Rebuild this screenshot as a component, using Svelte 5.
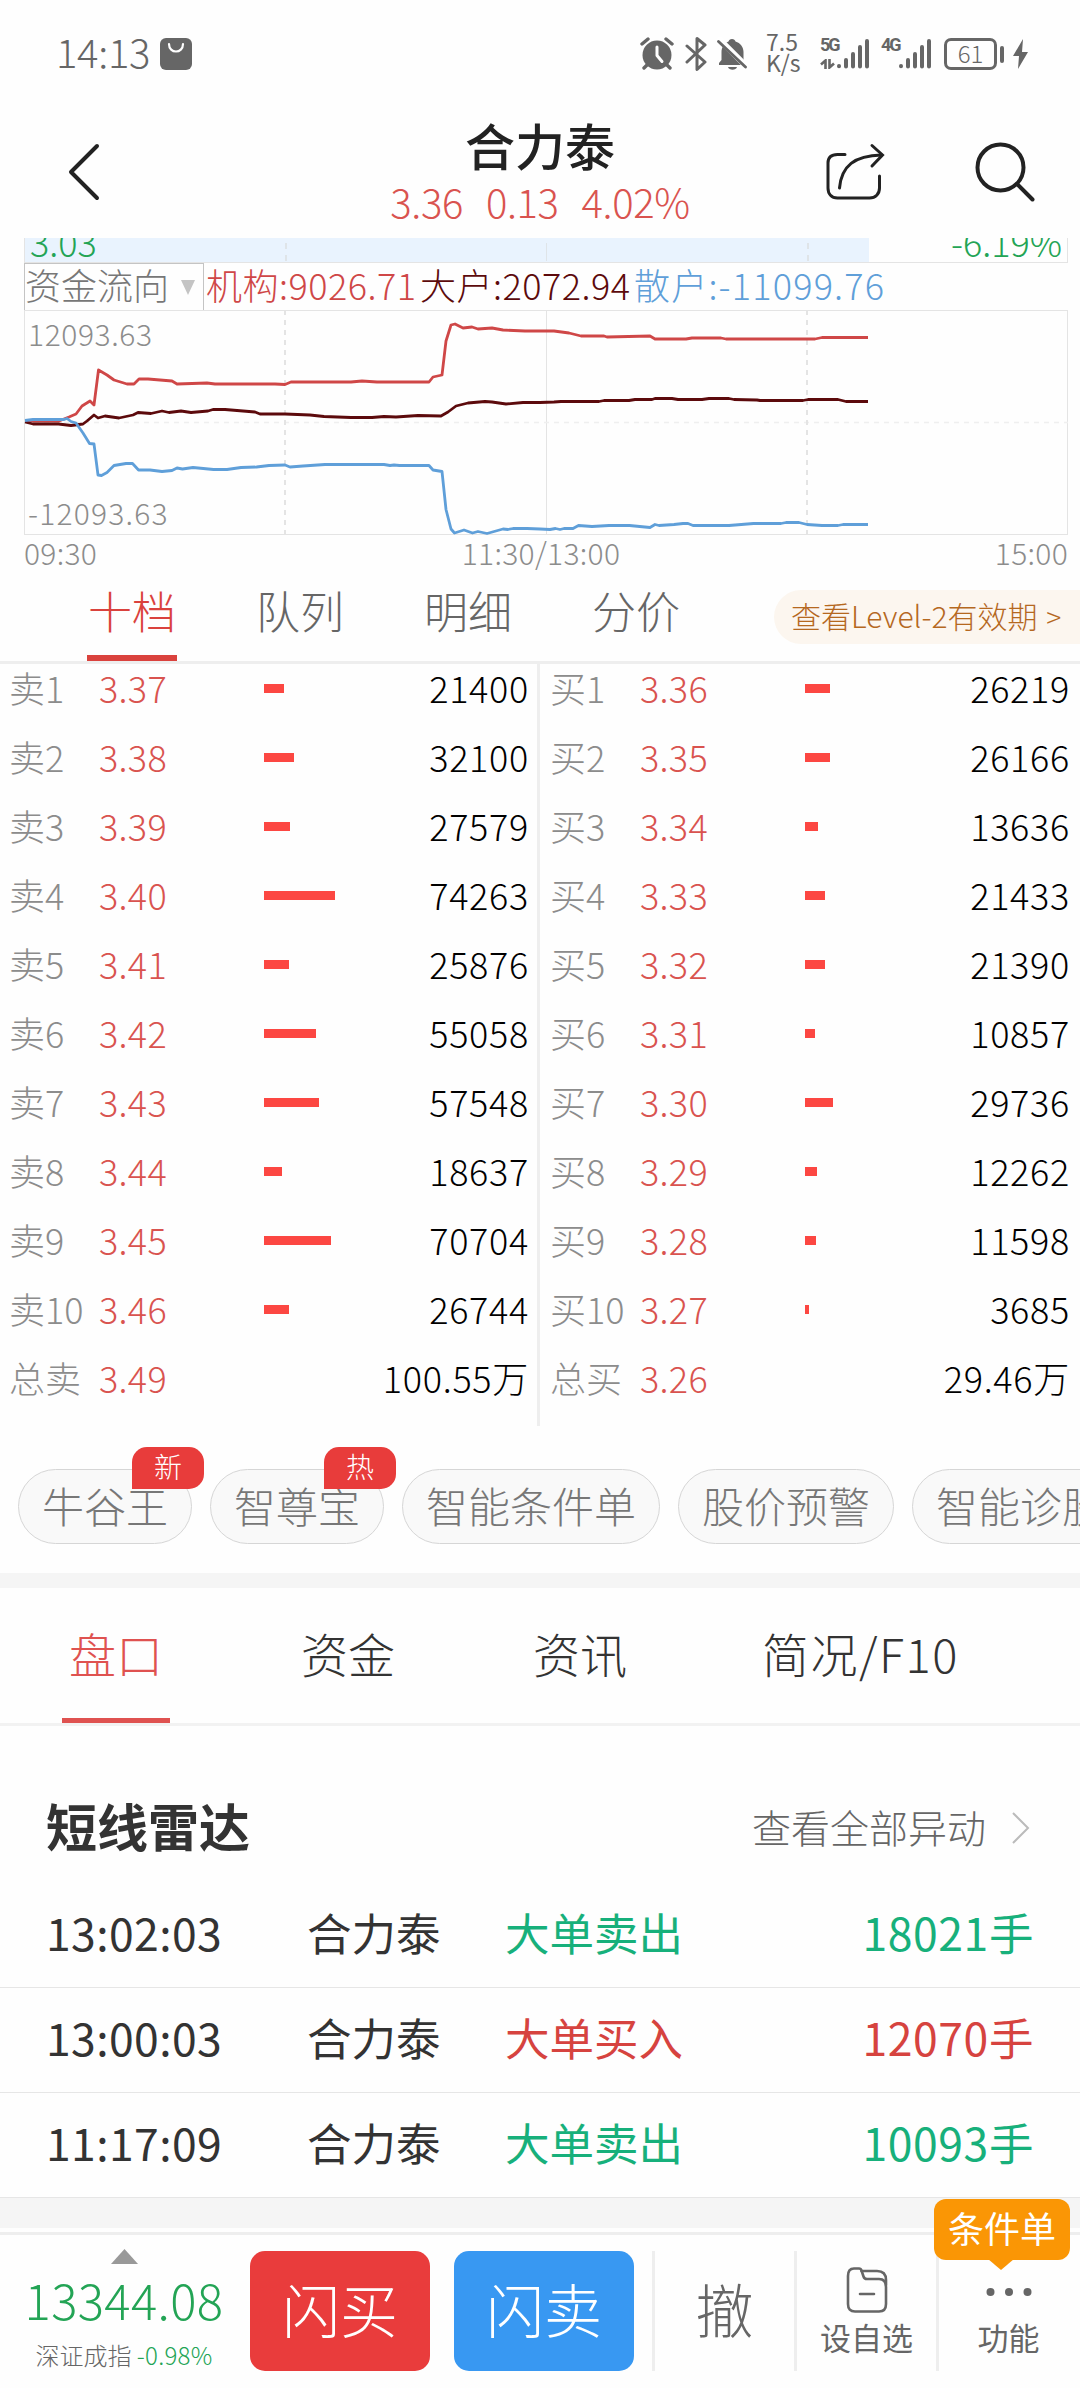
<script lang="ts">
  type Order = { label: string; price: string; amount: number | string };

  const sells: Order[] = [
    { label: '卖1', price: '3.37', amount: 21400 },
    { label: '卖2', price: '3.38', amount: 32100 },
    { label: '卖3', price: '3.39', amount: 27579 },
    { label: '卖4', price: '3.40', amount: 74263 },
    { label: '卖5', price: '3.41', amount: 25876 },
    { label: '卖6', price: '3.42', amount: 55058 },
    { label: '卖7', price: '3.43', amount: 57548 },
    { label: '卖8', price: '3.44', amount: 18637 },
    { label: '卖9', price: '3.45', amount: 70704 },
    { label: '卖10', price: '3.46', amount: 26744 },
    { label: '总卖', price: '3.49', amount: '100.55万' }
  ];

  const buys: Order[] = [
    { label: '买1', price: '3.36', amount: 26219 },
    { label: '买2', price: '3.35', amount: 26166 },
    { label: '买3', price: '3.34', amount: 13636 },
    { label: '买4', price: '3.33', amount: 21433 },
    { label: '买5', price: '3.32', amount: 21390 },
    { label: '买6', price: '3.31', amount: 10857 },
    { label: '买7', price: '3.30', amount: 29736 },
    { label: '买8', price: '3.29', amount: 12262 },
    { label: '买9', price: '3.28', amount: 11598 },
    { label: '买10', price: '3.27', amount: 3685 },
    { label: '总买', price: '3.26', amount: '29.46万' }
  ];

  const depthTabs = ['十档', '队列', '明细', '分价'];
  const infoTabs = ['盘口', '资金', '资讯', '简况/F10'];

  const tools = [
    { name: '牛谷王', badge: '新' },
    { name: '智尊宝', badge: '热' },
    { name: '智能条件单' },
    { name: '股价预警' },
    { name: '智能诊股' }
  ];

  const radar = [
    { time: '13:02:03', type: '大单卖出', amount: '18021手', side: 'sell' },
    { time: '13:00:03', type: '大单买入', amount: '12070手', side: 'buy' },
    { time: '11:17:09', type: '大单卖出', amount: '10093手', side: 'sell' }
  ];

  // capital flow lines, one per investor group
  const orgLine = '1,111 35,111 45,107 52,104 58,96 66,91 70,95 74.5,60 83,65 90,70 103,74 110,74 115,69 124,69 148,71 153,74 183,73 191,74 251,74 261,74.5 267,72 327,72 338,71 353,72 405,72 409,67 418,65 422,31 427,15 431,14 439,18 448,17 454,19 468,18 479,20 501,21 516,21 530,21 545,23 557,26 580,26 583,27 626,26 631,29 662,29 668,28 697,28 702,29 791,29 798,27.5 844,27.5';
  const bigLine = '1,112 9,114 34.5,114 47,115.5 59,114 63,111 70,105 74,108 81,106 95,108 109,105 114,102.5 127,103.5 138,101 145,102.5 157,101 167,102.5 184,101 189,99.5 201,99.5 231,102 236,104 251,104 261,104 286,105 300,106.5 327,107.5 348,107.5 360,106.5 372,107 394,105.5 417,106 424,102 432,96 444,93 461,91.5 468,92 482,94 499,92.5 516,92.5 530,92 537,91.5 575,91.5 580,90.5 605,90.5 611,89.5 628,89.5 631,88.5 648,88.5 654,89.5 678,89.5 685,88.5 705,88.5 710,89.5 733,90 736,90.5 779,90.5 784,89.5 814,89.5 822,91.5 844,91.5';
  const retailLine = '1,110.5 9,109.5 40,109.5 43,108.5 47,111.5 52,113 59,123 65.5,133.5 70,134 74,165 77.5,165.5 83,162.5 90,155.5 102,153.5 108.5,153.5 114.5,160 126,160 138,161.5 148,160.5 153,158 158.5,159 169,157.5 189.5,159.5 203,159.5 217,157.5 232.5,157 245,155.5 261,155 266,157 279,156 301,154.5 360,154.5 366,155.5 370,155 375.5,155.5 405,155.5 409,160 418,161.5 422,199.5 427,219 430.5,223 440,220 448.5,223 454,221.5 463,223.5 479,219 484,219.5 489,218.5 503,218.5 516,219 526,219.5 531.5,218.5 536,219.5 540,218.5 549,218.5 554.5,215.5 568,216.5 585,215.5 605.5,215.5 626,217.5 631,214.5 635,215.5 650,214.5 659,213.5 664,213.5 669,215.5 705,215.5 729.5,213.5 757,213.5 762,212.5 775,212.5 783,214.5 798,215.5 814,215.5 819,214.5 844,214.5';

  const barWidth = (amount: number) => Math.round(amount * 0.00095);
</script>

{#snippet orders(list: Order[])}
  <div class="orders">
    {#each list as row}
      <div class="order">
        <span class="order-label">{row.label}</span>
        <span class="order-price">{row.price}</span>
        <span class="order-track">
          {#if typeof row.amount === 'number'}
            <i class="order-bar" style="width: {barWidth(row.amount)}px"></i>
          {/if}
        </span>
        <span class="order-amount">{row.amount}</span>
      </div>
    {/each}
  </div>
{/snippet}

{#snippet signal()}
  <svg class="signal" width="34" height="32" viewBox="0 0 34 32">
    <g stroke="#666" stroke-width="4" stroke-linecap="round">
      <path d="M3 28v.2M10 22v6.5M17 16v12.5M24 9v19.5M31 3v25.5" />
    </g>
  </svg>
{/snippet}

<div class="app">
  <div class="status">
    <span class="clock">14:13</span>
    <svg class="bag" width="32" height="32" viewBox="0 0 32 32">
      <rect width="32" height="32" rx="6" fill="#666" />
      <path d="M9 6c0 10 14 10 14 0" fill="none" stroke="#fff" stroke-width="2.2" stroke-linecap="round" />
    </svg>
    <svg class="alarm" width="34" height="34" viewBox="0 0 34 34">
      <circle cx="17" cy="18" r="14.5" fill="#666" />
      <path d="M2 7l6-5M32 7l-6-5M7 28l-3 3M27 28l3 3" stroke="#666" stroke-width="3.4" stroke-linecap="round" />
      <path d="M17 10v8.500l5 6" fill="none" stroke="#fff" stroke-width="3" stroke-linecap="round" stroke-linejoin="round" />
    </svg>
    <svg class="bluetooth" width="22" height="36" viewBox="0 0 22 36">
      <path d="M2 10l18 16-8 7.500V2.500L20 9 2 26" fill="none" stroke="#666" stroke-width="3" stroke-linecap="round" stroke-linejoin="round" />
    </svg>
    <svg class="bell" width="31" height="34" viewBox="0 0 31 34">
      <path d="M15 2c2 0 3 1 3.500 2.500 5 1.500 8 5.500 8 10.500v8l3 5H2v-2l2.500-3v-8c0-5 3-9 7-10.500C12 3 13 2 15 2z" fill="#666" />
      <path d="M11 30h9c-1 3.500-8 3.500-9 0z" fill="#666" />
      <path d="M1 1l29 29" stroke="#fff" stroke-width="6" />
      <path d="M1.500 4.500l27 25.500" stroke="#666" stroke-width="2.800" stroke-linecap="round" />
    </svg>
    <span class="speed"><b>7.5</b><b>K/s</b></span>
    <span class="net">
      <b>5G</b>
      <svg width="15" height="10" viewBox="0 0 15 10">
        <path d="M5.500 10V1.500L1 5.500M9.500 0v8.500l4.500-4" fill="none" stroke="#666" stroke-width="2.600" />
      </svg>
    </span>
    {@render signal()}
    <span class="net net-4g"><b>4G</b></span>
    {@render signal()}
    <span class="battery">61</span>
    <i class="battery-cap"></i>
    <svg class="bolt" width="15" height="30" viewBox="0 0 15 30">
      <path d="M10 0L0 17h6L5 30l10-17H9z" fill="#666" />
    </svg>
  </div>

  <header>
    <svg class="back" width="34" height="60" viewBox="0 0 34 60">
      <path d="M30 4L4 30l26 26" fill="none" stroke="#222" stroke-width="4" stroke-linecap="round" stroke-linejoin="round" />
    </svg>
    <div class="stock">
      <h1>合力泰</h1>
      <p><span>3.36</span><span>0.13</span><span>4.02%</span></p>
    </div>
    <svg class="share" width="60" height="60" viewBox="0 0 60 60">
      <g fill="none" stroke="#222" stroke-width="3" stroke-linecap="round">
        <path d="M20 12.500h-7.500C6 12.500 3 16 3 21v25c0 6 3.500 10 9.500 10h32c6 0 10-4 10-10V34" />
        <path d="M14.500 46c2-22 15-32.500 42-33" />
        <path d="M47 3.500l10.500 9.500L47 24" />
      </g>
    </svg>
    <svg class="search" width="60" height="60" viewBox="0 0 60 60">
      <circle cx="25.500" cy="25.500" r="23" fill="none" stroke="#222" stroke-width="4" />
      <path d="M42 42l15.500 15.500" stroke="#222" stroke-width="4" stroke-linecap="round" />
    </svg>
  </header>

  <section class="trend">
    <div class="price-tail">
      <div class="price-fill"></div>
      <i class="tick tick-1"></i><i class="tick tick-2"></i><i class="tick tick-3"></i>
      <span class="low">3.03</span>
      <span class="low low-pct">-6.19%</span>
    </div>
    <div class="flow-head">
      <span class="picker">资金流向<i></i></span>
      <span class="org">机构:9026.71</span>
      <span class="big">大户:2072.94</span>
      <span class="retail">散户:-11099.76</span>
    </div>
    <div class="flow-chart">
      <svg width="1044" height="226" viewBox="0 0 1044 226">
        <g fill="none" stroke="#e4e4e4">
          <rect x="0.500" y="0.500" width="1043" height="224" />
          <path d="M522.500 0v225" />
          <path d="M0 112.500h1044" stroke="#efefef" stroke-dasharray="5 5" stroke-width="1.500" />
          <path d="M261 0v225M783 0v225" stroke-dasharray="5 5" stroke-width="2" />
        </g>
        <g fill="none" stroke-width="2.800" stroke-linejoin="round">
          <polyline points={orgLine} stroke="#cf4747" />
          <polyline points={bigLine} stroke="#5c0a0c" />
          <polyline points={retailLine} stroke="#5f9fd9" />
        </g>
      </svg>
      <span class="scale scale-top">12093.63</span>
      <span class="scale scale-bottom">-12093.63</span>
    </div>
    <div class="hours"><span>09:30</span><span class="noon">11:30/13:00</span><span>15:00</span></div>
  </section>

  <nav class="depth-tabs">
    {#each depthTabs as tab, i}
      <span class="depth-tab" class:active={i === 0}>{tab}</span>
    {/each}
    <span class="level2">查看Level-2有效期 <em>&gt;</em></span>
  </nav>

  <section class="book">
    {@render orders(sells)}
    {@render orders(buys)}
  </section>

  <section class="tools">
    {#each tools as tool}
      <span class="tool">
        {tool.name}
        {#if tool.badge}<em>{tool.badge}</em>{/if}
      </span>
    {/each}
  </section>

  <nav class="info-tabs">
    {#each infoTabs as tab, i}
      <span class="info-tab" class:active={i === 0}>{tab}</span>
    {/each}
  </nav>

  <section class="radar">
    <div class="radar-head">
      <h2>短线雷达</h2>
      <span>查看全部异动</span>
      <svg width="18" height="32" viewBox="0 0 18 32">
        <path d="M1 1l15 15L1 31" fill="none" stroke="#bbb" stroke-width="2" />
      </svg>
    </div>
    {#each radar as item}
      <div class="radar-row">
        <span class="radar-time">{item.time}</span>
        <span class="radar-name">合力泰</span>
        <span class={item.side}>{item.type}</span>
        <span class="radar-amount {item.side}">{item.amount}</span>
      </div>
    {/each}
  </section>

  <footer>
    <div class="index">
      <svg width="27" height="15" viewBox="0 0 27 15"><path d="M13.500 0L27 15H0z" fill="#999" /></svg>
      <strong>13344.08</strong>
      <p>深证成指 <span>-0.98%</span></p>
    </div>
    <button class="trade trade-buy">闪买</button>
    <button class="trade trade-sell">闪卖</button>
    <div class="cell revoke">撤</div>
    <div class="cell">
      <svg class="folder" width="42" height="46" viewBox="0 0 42 46">
        <g fill="none" stroke="#666" stroke-width="2.600" stroke-linecap="round" stroke-linejoin="round">
          <path d="M40 20v17q0 7.500-7 7.500H9q-7 0-7-7.500V9q0-7.500 6-7.500h5q2 0 2.500 2l2 6q.8 2.500 3.500 2.500h12q7 0 7 8z" />
          <path d="M15.500 4H31q9 0 9 9v5M14 27h14" />
        </g>
      </svg>
      <span>设自选</span>
    </div>
    <div class="cell more">
      <svg class="dots" width="46" height="10" viewBox="0 0 46 10">
        <g fill="#666"><circle cx="4.500" cy="5" r="4" /><circle cx="23" cy="5" r="4" /><circle cx="41.500" cy="5" r="4" /></g>
      </svg>
      <span>功能</span>
      <div class="tip">条件单</div>
    </div>
  </footer>
</div>

<style>
  :global(body) {
    margin: 0;
    background: #fefefe;
  }

  .app {
    width: 1080px;
    height: 2388px;
    overflow: hidden;
    font-family: 'Noto Sans CJK SC', 'Noto Sans', sans-serif;
    font-weight: 300;
    color: #333;
    white-space: nowrap;
  }

  .app * {
    box-sizing: border-box;
  }

  h1, h2, p {
    margin: 0;
  }

  em, i {
    font-style: normal;
  }

  svg {
    display: block;
    flex: none;
  }

  /* status bar */
  .status {
    display: flex;
    align-items: center;
    height: 108px;
    padding-left: 56px;
    color: #666;
  }

  .clock {
    width: 104px;
    font-size: 40px;
    line-height: 40px;
    letter-spacing: -0.3px;
    margin-top: -6px;
  }

  .alarm { margin-left: 448px; }
  .bluetooth { margin-left: 11px; }
  .bell { margin-left: 10px; }

  .speed {
    display: flex;
    flex-direction: column;
    width: 54px;
    margin: -5px 0 0 18px;
    font-size: 23px;
    line-height: 21px;
  }

  .speed b {
    font-weight: 400;
  }

  .net {
    display: flex;
    flex-direction: column;
    justify-content: space-between;
    width: 16px;
    height: 32px;
    padding-bottom: 1px;
    font-size: 18px;
    line-height: 14px;
    letter-spacing: -2px;
  }

  .net b {
    font-family: Roboto, sans-serif;
    font-weight: 700;
  }

  .net-4g { margin-left: 11px; width: 17px; }

  .battery {
    width: 53px;
    height: 32px;
    margin-left: 12px;
    border: 3px solid #666;
    border-radius: 7px;
    font-size: 24px;
    line-height: 23px;
    text-align: center;
  }

  .battery-cap {
    width: 4px;
    height: 17px;
    margin: 0 9px 0 3px;
    border-radius: 2px;
    background: #666;
  }

  /* title */
  header {
    display: flex;
    height: 130px;
    padding-left: 67px;
  }

  .back { margin-top: 34px; }

  .stock {
    width: 724px;
    padding-left: 154px;
    text-align: center;
  }

  h1 {
    margin-top: 9px;
    font-size: 50px;
    line-height: 54px;
    font-weight: 500;
    color: #222;
  }

  .stock p {
    display: flex;
    justify-content: center;
    gap: 23px;
    margin-top: 2px;
    font-size: 40px;
    line-height: 56px;
    letter-spacing: -0.4px;
    color: #d9534f;
  }

  header .share { margin-top: 34px; }
  header .search { margin: 34px 0 0 90px; }

  /* charts */
  .trend {
    height: 341px;
    padding-left: 24px;
  }

  .price-tail {
    position: relative;
    width: 1044px;
    height: 25px;
    border: 1px solid #e4e4e4;
    border-top: 0;
    overflow: hidden;
    font-size: 36px;
    line-height: 36px;
    color: #23a455;
  }

  .price-fill {
    width: 844px;
    height: 24px;
    background: #e9f3fe;
  }

  .tick {
    position: absolute;
    top: 5px;
    height: 18px;
    border-left: 2px dashed #dfe4e8;
  }

  .tick-1 { left: 260px; }
  .tick-2 { left: 521px; border-left: 1px solid #dfe4e8; }
  .tick-3 { left: 782px; }

  .low {
    position: absolute;
    left: 5px;
    bottom: 3px;
    height: 36px;
  }

  .low-pct {
    left: auto;
    right: 5px;
  }

  .flow-head {
    display: flex;
    align-items: center;
    height: 47px;
    font-size: 36px;
    line-height: 40px;
  }

  .flow-head .org,
  .flow-head .big,
  .flow-head .retail {
    margin-top: -5px;
    letter-spacing: 0.5px;
  }

  .picker {
    display: flex;
    align-items: center;
    justify-content: space-between;
    width: 180px;
    height: 48px;
    padding: 0 8px 5px 0;
    border: 1px solid #c4c4c4;
    color: #777;
  }

  .picker i {
    margin-top: 7px;
    border: 7.5px solid transparent;
    border-top: 15px solid #c4c4c4;
    border-bottom: 0;
  }

  .org { width: 216px; padding-left: 2px; color: #cf4747; }
  .big { width: 214px; color: #5c0a0c; }
  .flow-head .retail { color: #5f9fd9; letter-spacing: 1.2px; }

  .flow-chart {
    position: relative;
    height: 226px;
  }

  .scale {
    position: absolute;
    left: 4px;
    font-size: 30px;
    line-height: 30px;
    letter-spacing: 0.6px;
    color: #8c8c8c;
  }

  .scale-top { top: 8px; }
  .scale-bottom { bottom: 9px; letter-spacing: 1.2px; }

  .hours {
    display: flex;
    justify-content: space-between;
    width: 1044px;
    font-size: 30px;
    line-height: 34px;
    letter-spacing: 0.3px;
    color: #8c8c8c;
  }

  .hours span { margin-top: -1px; }
  .hours .noon { margin-left: -10px; }

  /* order book */
  .depth-tabs {
    display: flex;
    height: 85px;
    padding-left: 87px;
    border-bottom: 3px solid #eee;
    font-size: 44px;
    line-height: 63px;
    color: #666;
  }

  .depth-tab {
    height: 82px;
    width: 90px;
    margin-right: 78px;
    text-align: center;
  }

  .depth-tab.active {
    border-bottom: 6px solid #da423d;
    color: #da423d;
  }

  .level2 {
    flex: 1;
    height: 54px;
    margin: 11px 0 0 15px;
    padding-left: 17px;
    border-radius: 27px 0 0 27px;
    background: #fcf6ef;
    font-size: 30px;
    line-height: 51px;
    color: #b5681f;
  }

  .level2 em {
    margin-left: 2px;
    font-size: 28px;
  }

  .book {
    display: flex;
    height: 762px;
  }

  .orders {
    width: 541px;
    padding-left: 9px;
    border-right: 3px solid #eee;
  }

  .orders:last-child {
    padding-left: 10px;
    border: 0;
  }

  .order {
    display: flex;
    align-items: center;
    height: 69px;
    margin-top: -12px;
    margin-bottom: 12px;
    font-size: 36px;
  }

  .order-label { width: 90px; color: #8c8c8c; }
  .order-price { width: 165px; color: #d9534f; letter-spacing: 0.3px; }
  .order-track { width: 80px; }

  .order-bar {
    display: block;
    height: 9px;
    margin-top: 3px;
    background: #fc4742;
  }

  .order-amount {
    width: 185px;
    text-align: right;
    color: #000;
    letter-spacing: 0.7px;
  }

  /* shortcuts */
  .tools {
    display: flex;
    gap: 18px;
    height: 147px;
    padding: 43px 0 0 18px;
    overflow: hidden;
  }

  .tool {
    position: relative;
    flex: none;
    height: 75px;
    padding: 0 23px;
    border: 1px solid #d6d6d6;
    border-radius: 38px;
    background: #f9f9f9;
    font-size: 42px;
    line-height: 70px;
    color: #777;
  }

  .tool em {
    position: absolute;
    top: -23px;
    right: -13px;
    width: 72px;
    height: 42px;
    border-radius: 15px 15px 15px 0;
    background: #e83c3b;
    font-size: 28px;
    line-height: 39px;
    text-align: center;
    color: #fff;
  }

  .info-tabs {
    display: flex;
    height: 153px;
    padding-left: 62px;
    border-top: 15px solid #f5f5f5;
    border-bottom: 3px solid #f2f2f2;
    font-size: 47px;
    line-height: 129px;
    color: #333;
  }

  .info-tab {
    min-width: 108px;
    height: 135px;
    margin-right: 124px;
    text-align: center;
  }

  .info-tab.active {
    border-bottom: 5px solid #df5250;
    color: #df5250;
  }

  .info-tab:last-child {
    margin: 0 0 0 4px;
    letter-spacing: 1.5px;
  }

  /* radar */
  .radar {
    border-bottom: 30px solid #f5f5f5;
  }

  .radar-head {
    display: flex;
    align-items: center;
    height: 157px;
    padding: 42px 50px 0 46px;
  }

  h2 {
    flex: 1;
    margin-top: -2px;
    font-size: 51px;
    line-height: 60px;
    font-weight: 700;
  }

  .radar-head span {
    margin-right: 26px;
    font-size: 39px;
    color: #666;
  }

  .radar-head svg {
    margin-top: 4px;
  }

  .radar-row {
    display: flex;
    height: 105px;
    padding: 0 46px;
    border-bottom: 1px solid #e6e6e6;
    font-size: 44.500px;
    line-height: 98px;
    font-weight: 400;
  }

  .radar-time { width: 261px; letter-spacing: 0.4px; }
  .radar-name { width: 198px; }
  .radar-amount { margin-left: auto; letter-spacing: 0.6px; }
  .sell { color: #17b07b; }
  .buy { color: #d6433f; }

  /* bottom bar */
  footer {
    display: flex;
    height: 156px;
    margin-top: 4px;
    padding-top: 16px;
    border-top: 3px solid #eee;
  }

  .index {
    display: flex;
    flex-direction: column;
    align-items: center;
    width: 250px;
    margin-top: -2px;
    padding-right: 2px;
    line-height: 1;
  }

  .index strong {
    margin-top: 7px;
    font-size: 49px;
    line-height: 56px;
    font-weight: 300;
    letter-spacing: 0.4px;
    color: #23a455;
  }

  .index p {
    margin-top: 11px;
    font-size: 24px;
    line-height: 34px;
    color: #666;
  }

  .index p span {
    letter-spacing: 0.3px;
    color: #23a455;
  }

  .trade {
    width: 180px;
    height: 120px;
    margin-right: 24px;
    padding: 0 0 6px;
    border: 0;
    border-radius: 15px;
    font: inherit;
    font-size: 58px;
    color: #fff;
  }

  .trade-buy { background: #e93c3c; }
  .trade-sell { background: #3898f2; margin-right: 18px; }

  .cell {
    position: relative;
    display: flex;
    flex-direction: column;
    align-items: center;
    width: 142px;
    height: 120px;
    border-left: 3px solid #eee;
    font-size: 31px;
    line-height: 40px;
    font-weight: 400;
    color: #666;
  }

  .revoke {
    font-size: 58px;
    line-height: 114px;
    font-weight: 300;
  }

  .folder { margin: 16px 0 4px; }
  .dots { margin: 36px 0 20px; }

  .tip {
    position: absolute;
    left: -5px;
    top: -52px;
    width: 136px;
    height: 61px;
    border-radius: 12px;
    background: #fa9605;
    font-size: 36px;
    line-height: 57px;
    text-align: center;
    color: #fff;
  }

  .tip::after {
    content: '';
    position: absolute;
    left: 54px;
    top: 60px;
    border: 13px solid transparent;
    border-top: 11px solid #fa9605;
    border-bottom: 0;
  }
</style>
